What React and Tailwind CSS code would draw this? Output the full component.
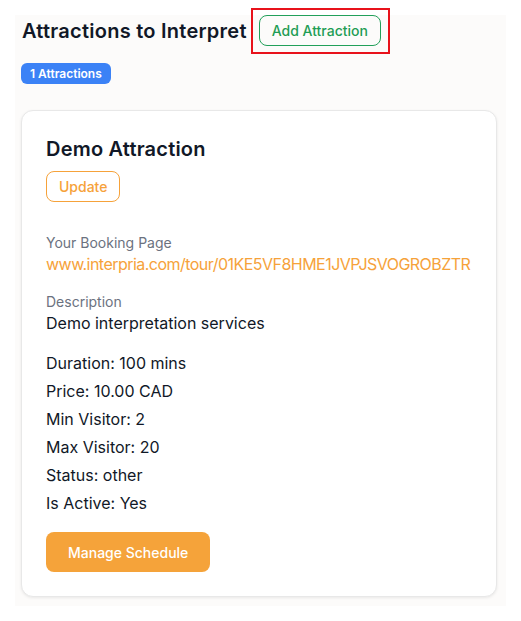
import React from "react";

const attraction = {
  name: "Demo Attraction",
  url: "www.interpria.com/tour/01KE5VF8HME1JVPJSVOGROBZTR",
  description: "Demo interpretation services",
  details: [
    "Duration: 100 mins",
    "Price: 10.00 CAD",
    "Min Visitor: 2",
    "Max Visitor: 20",
    "Status: other",
    "Is Active: Yes",
  ],
};

export default function App() {
  return (
    <div className="min-h-screen bg-white p-[15px] text-[#111827]" style={{ fontFamily: "Inter, 'Noto Sans', sans-serif" }}>
      <div className="bg-[#fcfbfa] pl-[6px] pr-[9px] pb-[9px]">
        <div className="flex items-center gap-3 pl-[1px]">
          <h2 className="text-[20px] font-semibold leading-7 tracking-[0.25px]">Attractions to Interpret</h2>
          {/* red highlight frame around the button */}
          <div className="-mb-[8px] -ml-[8px] -mr-[9px] -mt-[7px] border-2 border-[#e8121b] pb-[6px] pl-[6px] pr-[7px] pt-[5px]">
            <button className="block h-[31px] rounded-lg border border-[#22a05a] px-[12px] text-[14px] font-medium text-[#1f9d55]">
              Add Attraction
            </button>
          </div>
        </div>

        <div className="mt-[17px] flex">
          <span className="inline-flex h-[21px] items-center rounded-md bg-[#3b82f6] px-[9px] text-[12px] font-semibold text-white">
            1 Attractions
          </span>
        </div>

        <div className="mt-[26px] rounded-xl border border-[#e8e8e8] bg-white p-6 shadow-[0_1px_3px_rgba(0,0,0,0.08)]">
          <h3 className="text-[20px] font-semibold leading-7 tracking-[0.2px]">{attraction.name}</h3>
          <button className="mt-2 block h-[31px] rounded-lg border border-[#f6a23a] px-[12px] text-[14px] font-medium text-[#f6a23a]">
            Update
          </button>

          <div className="mt-[31px]">
            <div className="text-[14px] leading-[19px] text-[#6b7280]">Your Booking Page</div>
            <div className="text-[16px] leading-6 text-[#f6a23a] tracking-[-0.53px]">{attraction.url}</div>
          </div>

          <div className="mt-4">
            <div className="text-[14px] leading-[19px] text-[#6b7280]">Description</div>
            <div className="text-[16px] leading-6">{attraction.description}</div>
          </div>

          <div className="mt-4 flex flex-col gap-1">
            {attraction.details.map((d) => (
              <div key={d} className="text-[16px] leading-6">
                {d}
              </div>
            ))}
          </div>

          <button className="mt-[17px] block h-10 rounded-lg bg-[#f5a33a] px-[22px] text-[14px] font-medium text-white">
            Manage Schedule
          </button>
        </div>
      </div>
    </div>
  );
}
